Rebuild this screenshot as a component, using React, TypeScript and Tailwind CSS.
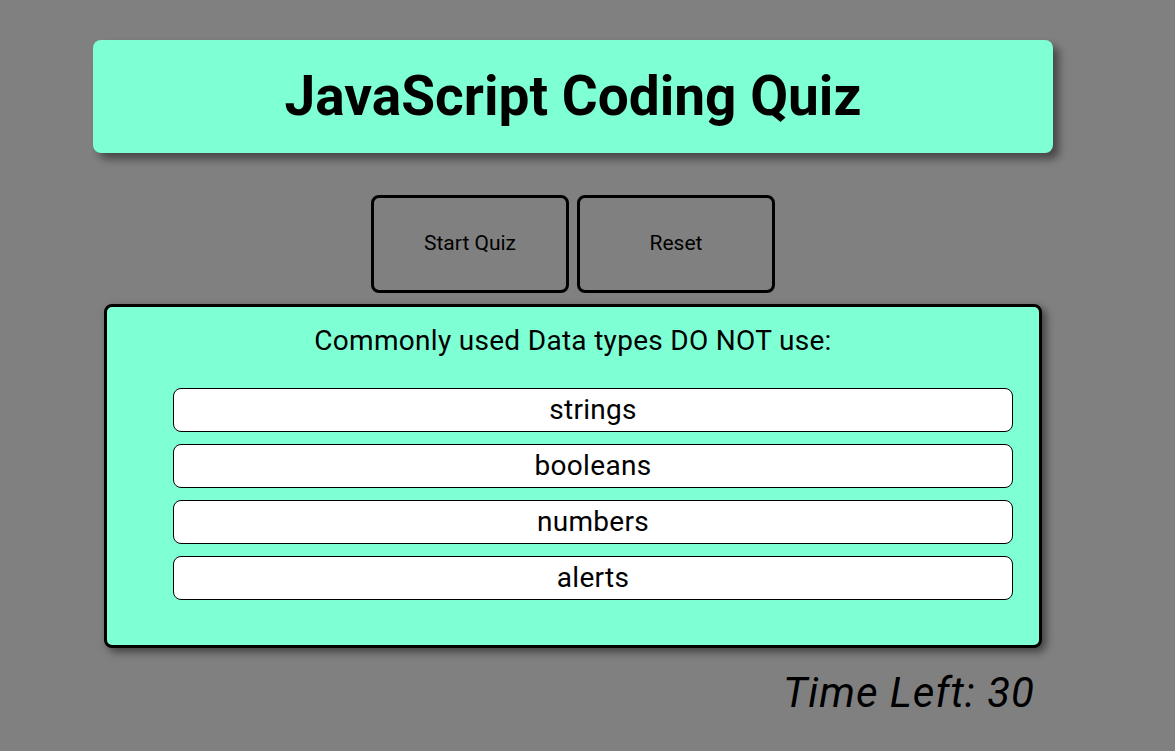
const options = ['strings', 'booleans', 'numbers', 'alerts']

export default function App() {
  return (
    <div className="min-h-[751px] w-full bg-[#808080] font-['Roboto',sans-serif] text-black">
      <div className="ml-[93px] w-[960px] pt-[40px]">
        <header className="flex h-[113px] items-center justify-center rounded-lg bg-[#7fffd4] shadow-[6px_6px_8px_rgba(0,0,0,0.45)]">
          <h1 className="text-[55px] font-bold leading-none">JavaScript Coding Quiz</h1>
        </header>

        <div className="mt-[42px] flex justify-center gap-[8px]">
          <button className="h-[98px] w-[198px] rounded-lg border-[3px] border-black text-[21px]">Start Quiz</button>
          <button className="h-[98px] w-[198px] rounded-lg border-[3px] border-black text-[21px]">Reset</button>
        </div>

        <section className="mx-[11px] mt-[11px] rounded-lg border-[3px] border-black bg-[#7fffd4] pb-[45px] pt-[17px] shadow-[4px_4px_8px_rgba(0,0,0,0.5)]">
          <p className="text-center text-[28px] leading-[34px] tracking-[0.3px]">Commonly used Data types DO NOT use:</p>
          <ul className="mt-[30px] flex flex-col gap-[12px] pl-[66px]">
            {options.map((o) => (
              <li
                key={o}
                className="flex h-[44px] w-[840px] items-center justify-center rounded-lg border border-black bg-white text-[28px] tracking-[0.3px]"
              >
                {o}
              </li>
            ))}
          </ul>
        </section>

        <div className="mt-[20px] pr-[18px] text-right text-[42px] leading-[50px] italic tracking-[1px]">Time Left: 30</div>
      </div>
    </div>
  )
}
